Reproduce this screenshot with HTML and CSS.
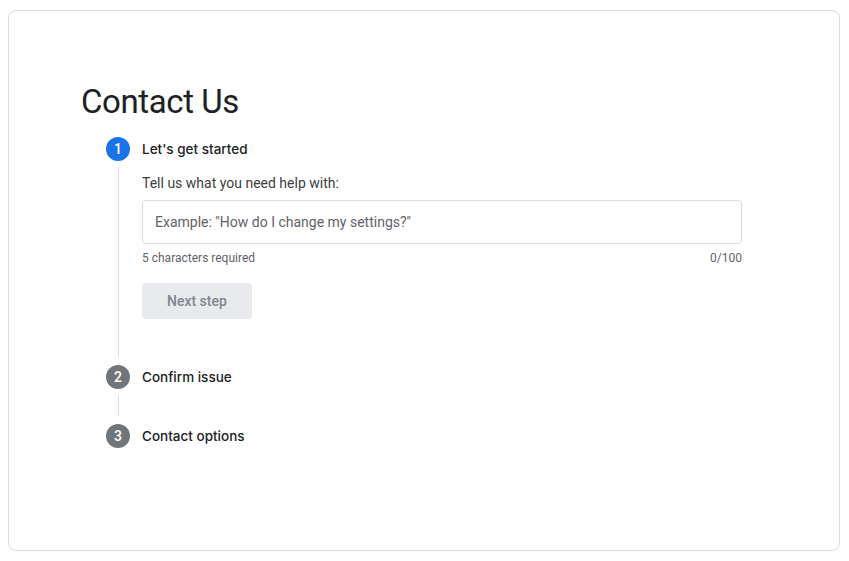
FILE: index.html
```html
<!DOCTYPE html>
<html>
<head>
    <meta charset="utf-8">
    <title>Contact Us</title>
    <link rel="stylesheet" href="styles.css">
</head>
<body>
    <div class="card">
        <h1 class="titulo">Contact Us</h1>

        <div class="stepper">
            <div class="step">
                <div class="step-rail">
                    <span class="step-num ativo">1</span>
                    <span class="step-line"></span>
                </div>
                <div class="step-main">
                    <div class="step-label">Let's get started</div>
                    <div class="step-body">
                        <label class="pergunta" for="pergunta">Tell us what you need help with:</label>
                        <input id="pergunta" class="campo" type="text" placeholder='Example: "How do I change my settings?"'>
                        <div class="ajuda">
                            <span>5 characters required</span>
                            <span>0/100</span>
                        </div>
                        <button class="botao" disabled>Next step</button>
                    </div>
                </div>
            </div>

            <div class="step fechado">
                <div class="step-rail">
                    <span class="step-num">2</span>
                    <span class="step-line"></span>
                </div>
                <div class="step-main">
                    <div class="step-label">Confirm issue</div>
                </div>
            </div>

            <div class="step ultimo">
                <div class="step-rail">
                    <span class="step-num">3</span>
                </div>
                <div class="step-main">
                    <div class="step-label">Contact options</div>
                </div>
            </div>
        </div>
    </div>
</body>
</html>
```

FILE: styles.css
```css
* {
    box-sizing: border-box;
}

body {
    margin: 0;
    font-family: Roboto, "Liberation Sans", Arial, sans-serif;
    color: #202124;
    background: #fff;
}

.card {
    margin: 10px 9px 10px 8px;
    height: 541px;
    border: 1px solid #dadce0;
    border-radius: 8px;
    padding: 71px 72px 0;
}

.titulo {
    margin: 0 0 15px;
    font-size: 33px;
    line-height: 40px;
    font-weight: 400;
    color: #202124;
    letter-spacing: -0.4px;
}

.stepper {
    margin-left: 25px;
}

.step {
    display: grid;
    grid-template-columns: 24px 1fr;
    column-gap: 12px;
}

.step-rail {
    display: flex;
    flex-direction: column;
    align-items: center;
}

.step-num {
    width: 24px;
    height: 24px;
    border-radius: 50%;
    background: #70757a;
    color: #fff;
    font-size: 14px;
    font-weight: 500;
    line-height: 24px;
    text-align: center;
}

.step-num.ativo {
    background: #1a73e8;
}

.step-line {
    flex: 1;
    width: 1px;
    background: #dadce0;
    margin: 6px 0 8px;
}

.step-label {
    font-family: Inter, Roboto, sans-serif;
    font-size: 13.5px;
    font-weight: 500;
    line-height: 24px;
    color: #202124;
}

.step-body {
    padding: 12px 0 46px;
    width: 600px;
}

.pergunta {
    display: block;
    font-size: 14px;
    line-height: 20px;
    color: #3c4043;
    margin-bottom: 7px;
}

.campo {
    display: block;
    width: 600px;
    height: 44px;
    border: 1px solid #dadce0;
    border-radius: 4px;
    padding: 0 12px;
    font-family: Roboto, "Liberation Sans", Arial, sans-serif;
    font-size: 14px;
    color: #202124;
    outline: none;
}

.campo::placeholder {
    color: #5f6368;
}

.ajuda {
    display: flex;
    justify-content: space-between;
    margin-top: 6px;
    font-size: 12px;
    line-height: 16px;
    color: #5f6368;
}

.botao {
    margin-top: 17px;
    height: 36px;
    padding: 0 25px;
    border: none;
    border-radius: 4px;
    background: #e8eaed;
    color: #80868b;
    font-family: Roboto, "Liberation Sans", Arial, sans-serif;
    font-size: 14px;
    font-weight: 500;
}

.fechado .step-main {
    padding-bottom: 35px;
}
```
